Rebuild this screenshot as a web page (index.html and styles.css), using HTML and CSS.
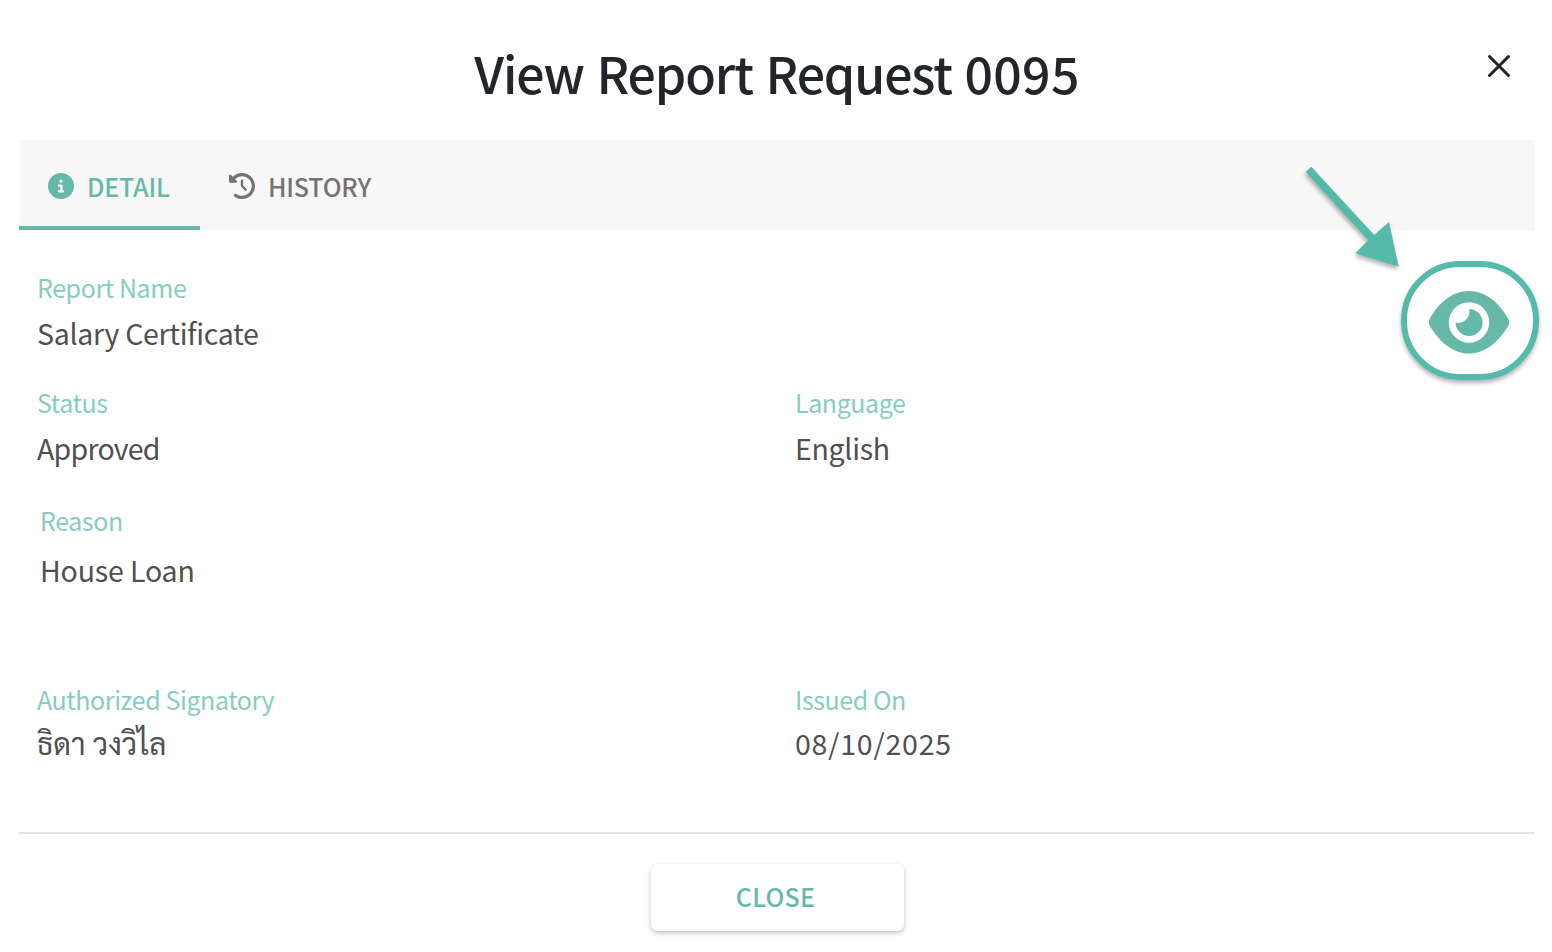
FILE: index.html
```html
<!DOCTYPE html>
<html lang="en">
<head>
    <meta charset="UTF-8">
    <meta name="viewport" content="width=device-width">
    <title>View Report Request 0095</title>
    <link rel="stylesheet" href="styles.css">
</head>

<body>

<div class="modal">
  <header class="modal-header">
    <h1>View Report Request <span class="number">0095</span></h1>
    <button class="dismiss" aria-label="Close">
      <svg width="24" height="24" viewBox="0 0 24 24"><path d="M2.5 2.5l19 19M21.5 2.5l-19 19" stroke="#222" stroke-width="3" stroke-linecap="round"/></svg>
    </button>
  </header>

  <nav class="tabs">
    <a class="tab active">
      <svg width="26" height="26" viewBox="0 0 512 512"><path fill="currentColor" d="M256 512A256 256 0 1 0 256 0a256 256 0 1 0 0 512zM216 336h24V272H216c-13.3 0-24-10.7-24-24s10.7-24 24-24h48c13.3 0 24 10.7 24 24v88h8c13.3 0 24 10.7 24 24s-10.7 24-24 24H216c-13.3 0-24-10.7-24-24s10.7-24 24-24zm40-208a32 32 0 1 1 0 64 32 32 0 1 1 0-64z"/></svg>
      <span>DETAIL</span>
    </a>
    <a class="tab">
      <svg width="26" height="26" viewBox="0 0 512 512"><path fill="currentColor" d="M75 75L41 41C25.9 25.9 0 36.6 0 57.9V168c0 13.3 10.7 24 24 24H134.1c21.4 0 32.1-25.9 17-41l-30.8-30.8C155 85.5 203 64 256 64c106 0 192 86 192 192s-86 192-192 192c-40.8 0-78.6-12.7-109.7-34.4c-14.5-10.1-34.4-6.6-44.6 7.9s-6.6 34.4 7.9 44.6C151.2 495 201.7 512 256 512c141.4 0 256-114.6 256-256S397.4 0 256 0C185.3 0 121.3 28.7 75 75zm181 53c-13.3 0-24 10.7-24 24V256c0 6.4 2.5 12.5 7 17l72 72c9.4 9.4 24.6 9.4 33.9 0s9.4-24.6 0-33.9l-65-65V152c0-13.3-10.7-24-24-24z"/></svg>
      <span>HISTORY</span>
    </a>
  </nav>

  <main class="detail">
    <div class="field">
      <div class="label">Report Name</div>
      <div class="value">Salary Certificate</div>
    </div>
    <a class="preview">
      <svg width="82" height="64" viewBox="0 0 82 64">
        <path fill="#66b9a8" d="M1.2 29.9C10 13.3 24 1 41 1s31 12.3 39.8 28.9q1.2 2.4 0 4.8C72 50.3 58 63.6 41 63.6S10 50.3 1.2 34.7q-1.2-2.4 0-4.8z"/>
        <circle cx="41" cy="32.5" r="20.2" fill="#fff"/>
        <path fill="#66b9a8" d="M41 19a13.5 13.5 0 1 1-13.4 13.6c8 2 15.8-6 13.4-13.6z"/>
      </svg>
    </a>
    <div class="field">
      <div class="label">Status</div>
      <div class="value tight">Approved</div>
    </div>
    <div class="field">
      <div class="label">Language</div>
      <div class="value">English</div>
    </div>
    <div class="field reason">
      <div class="label">Reason</div>
      <div class="value">House Loan</div>
    </div>
    <div class="field">
      <div class="label">Authorized Signatory</div>
      <div class="value thai" lang="th">ธิดา วงวิไล</div>
    </div>
    <div class="field">
      <div class="label">Issued On</div>
      <div class="value date">08/10/2025</div>
    </div>
  </main>

  <footer class="modal-footer">
    <button class="close">CLOSE</button>
  </footer>
</div>

<!-- callout over the preview button -->
<div class="ring"></div>
<svg class="arrow" width="110" height="120" viewBox="1300 160 110 120">
  <path fill="#55baaa" d="M1305.7 172l5.6-5.3 63 68.3 14.7-13 9.7 44.7-43.4-13.4 13-13z"/>
</svg>

</body>
</html>
```

FILE: styles.css
```css
* {
    box-sizing: border-box;
}
body {
    margin: 0;
    height: 952px;
    overflow: hidden;
    background: #fff;
    font-family: "Noto Sans CJK SC", "Noto Sans", sans-serif;
}
svg {
    display: block;
    flex: none;
}
button {
    border: 0;
    background: none;
    font-family: inherit;
    cursor: pointer;
}
.modal {
    padding: 0 17px 0 19px;
}
.modal-header {
    display: grid;
    grid-template-columns: 74px 1fr 74px;
    height: 140px;
}
h1 {
    grid-column: 2;
    margin: 0;
    padding-top: 33px;
    font-size: 50px;
    line-height: 78px;
    font-weight: 500;
    letter-spacing: -1.1px;
    word-spacing: 2.5px;
    text-align: center;
    white-space: nowrap;
    color: #22262b;
}
.number {
    letter-spacing: .3px;
}
.dismiss {
    align-self: start;
    margin: 54px 0 0 26px;
    padding: 0;
    width: 24px;
}
.tabs {
    display: flex;
    height: 90px;
    background: #f7f7f7;
}
.tab {
    display: flex;
    align-items: center;
    gap: 13px;
    padding: 6px 29px 0;
    border-bottom: 4px solid transparent;
    font-size: 25px;
    line-height: 36px;
    font-weight: 500;
    letter-spacing: -.2px;
    color: #747474;
}
.tab span {
    margin-top: -1px;
}
.tab.active {
    width: 181px;
    color: #66b9a8;
    border-color: #66b9a8;
}
.detail {
    display: grid;
    grid-template-columns: 758px 758px;
    grid-template-rows: 115px 118px 179px 131px;
    padding: 39px 0 18px;
    height: 602px;
}
.field {
    padding-left: 18px;
    white-space: nowrap;
}
.label {
    font-size: 25px;
    line-height: 36px;
    letter-spacing: -.42px;
    color: #86cdbf;
}
.value {
    margin-top: 7px;
    font-size: 28.5px;
    line-height: 42px;
    letter-spacing: -.3px;
    color: #505050;
}
.tight {
    letter-spacing: -.75px;
}
.preview {
    justify-self: end;
    margin: 21px 25px 0 0;
}
.reason {
    grid-column: 1 / 3;
    padding-left: 21px;
}
.reason .value {
    margin-top: 11px;
    letter-spacing: -.15px;
}
.thai {
    margin-top: 5px;
    font-family: Sarabun, "Noto Sans Thai Looped", Loma, "Noto Sans", sans-serif;
    font-size: 30px;
    letter-spacing: 0;
}
.date {
    margin-top: 5px;
    letter-spacing: .8px;
}
.modal-footer {
    display: flex;
    justify-content: center;
    padding-top: 30px;
    border-top: 2px solid #e4e4e4;
}
.close {
    width: 253px;
    height: 67px;
    padding: 0 9px 3px 6px;
    border-radius: 7px;
    background: #fff;
    box-shadow: 0 2px 5px rgba(0, 0, 0, .25);
    font-size: 25px;
    font-weight: 500;
    letter-spacing: .2px;
    color: #66b9a8;
}
.ring {
    position: absolute;
    left: 1401px;
    top: 261px;
    width: 138px;
    height: 119px;
    border: 6px solid #55baaa;
    border-radius: 59px;
    box-shadow: 0 3px 4px rgba(0, 0, 0, .3);
}
.arrow {
    position: absolute;
    left: 1300px;
    top: 160px;
    filter: drop-shadow(-1px 3px 2px rgba(0, 0, 0, .3));
}
```
